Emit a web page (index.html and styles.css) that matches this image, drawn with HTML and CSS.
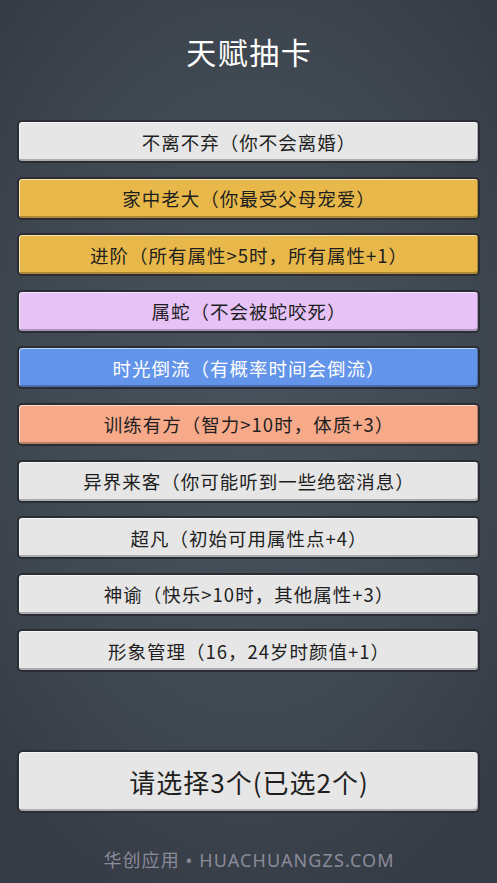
FILE: index.html
```html
<!DOCTYPE html>
<html lang="zh">
<head>
<meta charset="utf-8">
<link rel="stylesheet" href="styles.css">
</head>
<body>
<div class="page">
  <h1 class="title">天赋抽卡</h1>
  <div class="list">
    <div class="card grey">不离不弃（你不会离婚）</div>
    <div class="card gold">家中老大（你最受父母宠爱）</div>
    <div class="card gold">进阶（所有属性&gt;5时，所有属性+1）</div>
    <div class="card purple">属蛇（不会被蛇咬死）</div>
    <div class="card blue">时光倒流（有概率时间会倒流）</div>
    <div class="card orange">训练有方（智力&gt;10时，体质+3）</div>
    <div class="card grey">异界来客（你可能听到一些绝密消息）</div>
    <div class="card grey">超凡（初始可用属性点+4）</div>
    <div class="card grey">神谕（快乐&gt;10时，其他属性+3）</div>
    <div class="card grey">形象管理（16，24岁时颜值+1）</div>
  </div>
  <div class="confirm">请选择3个(已选2个)</div>
  <div class="footer">华创应用 • HUACHUANGZS.COM</div>
</div>
</body>
</html>
```

FILE: styles.css
```css
* { box-sizing: border-box; }
html, body { margin: 0; padding: 0; }
body {
  width: 497px;
  height: 883px;
  overflow: hidden;
  font-family: "Noto Sans CJK SC", "Noto Sans", sans-serif;
  background: radial-gradient(ellipse 70% 60% at 50% 45%, #48525c 0%, #414a53 55%, #363c45 100%);
}
.page {
  height: 883px;
  display: flex;
  flex-direction: column;
  padding: 0 17px;
}
.title {
  margin: 28px 0 0;
  height: 46px;
  line-height: 46px;
  text-align: center;
  color: #ffffff;
  font-size: 30px;
  font-weight: 400;
  letter-spacing: 1.5px;
  padding-left: 1.5px;
}
.list {
  margin-top: 46px;
  display: flex;
  flex-direction: column;
  gap: 13.6px;
}
.card {
  height: 43px;
  border: 2px solid #2a2e34;
  border-radius: 5px;
  display: flex;
  align-items: center;
  justify-content: center;
  font-size: 18.5px;
  letter-spacing: 1px;
  padding-left: 1px;
  color: #1e1e1e;
  box-shadow: inset 1px 1px 0 rgba(255,255,255,0.6), inset -1px -2px 0 rgba(0,0,0,0.25);
}
.grey { background: #e6e6e6; }
.gold { background: #e8b94a; }
.purple { background: #e6c2f6; }
.blue { background: #6294e9; color: #ffffff; }
.orange { background: #f6aa8a; }
.confirm {
  margin-top: 78px;
  height: 63px;
  border: 2px solid #2a2e34;
  border-radius: 6px;
  background: #e6e6e6;
  display: flex;
  align-items: center;
  justify-content: center;
  font-size: 26px;
  letter-spacing: 1px;
  padding-left: 1px;
  color: #1e1e1e;
  box-shadow: inset 1px 1px 0 rgba(255,255,255,0.6), inset -1px -2px 0 rgba(0,0,0,0.25);
}
.footer {
  margin-top: 34px;
  text-align: center;
  color: #8b8a9b;
  font-family: "Noto Sans", "Noto Sans CJK SC", sans-serif;
  font-size: 18px;
  letter-spacing: 1.1px;
  padding-left: 1.1px;
  line-height: 26px;
}
```
